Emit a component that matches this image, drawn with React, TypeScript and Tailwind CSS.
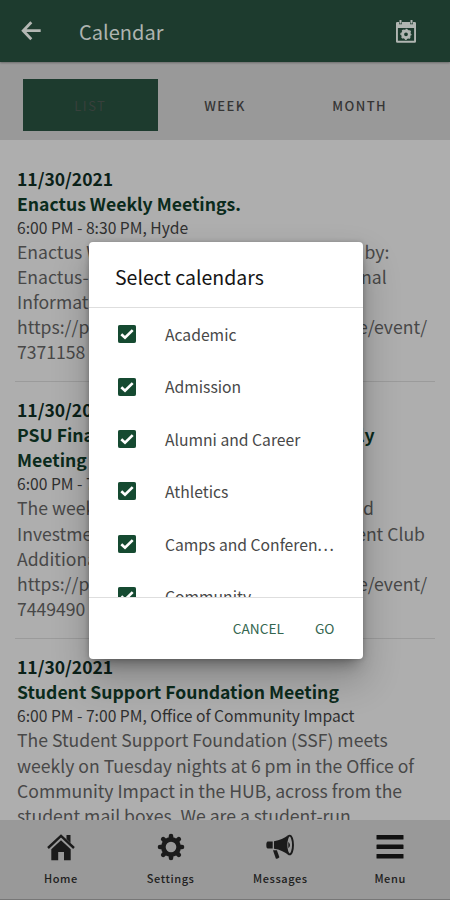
import React, { useState } from "react";

type EventItem = {
  date: string;
  title: string[];
  time: string;
  lines: string[];
};

const tabs = ["LIST", "WEEK", "MONTH"];

const events: EventItem[] = [
  {
    date: "11/30/2021",
    title: ["Enactus Weekly Meetings."],
    time: "6:00 PM - 8:30 PM, Hyde",
    lines: [
      "Enactus Weekly Meeting. Event sponsored by:",
      "Enactus-Plymouth State Meetings. Additional",
      "Information:",
      "https://plymouth.campuslabs.com/engage/event/",
      "7371158",
    ],
  },
  {
    date: "11/30/2021",
    title: ["PSU Finance and Investment Club Weekly", "Meeting"],
    time: "6:00 PM - 7:00 PM, Hyde",
    lines: [
      "The weekly meeting of the PSU Finance and",
      "Investment Club. Sponsored by a Investment Club",
      "Additional Information:",
      "https://plymouth.campuslabs.com/engage/event/",
      "7449490",
    ],
  },
  {
    date: "11/30/2021",
    title: ["Student Support Foundation Meeting"],
    time: "6:00 PM - 7:00 PM, Office of Community Impact",
    lines: [
      "The Student Support Foundation (SSF) meets",
      "weekly on Tuesday nights at 6 pm in the Office of",
      "Community Impact in the HUB, across from the",
      "student mail boxes. We are a student-run",
    ],
  },
];

const calendars = ["Academic", "Admission", "Alumni and Career", "Athletics", "Camps and Conferences", "Community"];

const MAX_LABEL = 18;

const BackIcon = () => (
  <svg width="20" height="20" viewBox="0 0 20 20" fill="none" stroke="#b4b8b4" strokeWidth="2.8">
    <path d="M10.300 1.200 2.200 9.700l8.100 8.500M2.400 9.700h17.300" />
  </svg>
);

const CalendarGearIcon = () => (
  <svg width="20" height="23" viewBox="0 0 20 23">
    <path
      fill="#b1b6b2"
      fillRule="evenodd"
      d="M1.500 2H3v2.200h3V2h8v2.200h3V2h1.500A1.300 1.300 0 0 1 20 3.300v18.200a1.300 1.300 0 0 1-1.300 1.300H1.300A1.300 1.300 0 0 1 0 21.500V3.300A1.300 1.300 0 0 1 1.500 2ZM1.900 8v12.800h16.200V8Z"
    />
    <path fill="#b1b6b2" d="M3.500 0h2v3.400h-2zM14.500 0h2v3.400h-2z" />
    <circle cx="10" cy="14.300" r="3.400" fill="none" stroke="#b1b6b2" strokeWidth="3" />
    <circle cx="10" cy="14.300" r="5" fill="none" stroke="#b1b6b2" strokeWidth="1.300" strokeDasharray="1.900 2.027" strokeDashoffset="0.950" />
  </svg>
);

const HomeIcon = () => (
  <svg width="28" height="27" viewBox="0 0 28 27" fill="#1b1b1b">
    <path d="M19.500 1h4v8l-4-4z" />
    <path d="M1 14 14 1.800 27 14" fill="none" stroke="#1b1b1b" strokeWidth="2.400" />
    <path d="M14 6.200 23.700 15.200V26.300H17v-8.300h-5.800v8.300H4.300V15.200z" />
  </svg>
);

const GearIcon = () => (
  <svg width="28" height="28" viewBox="0 0 28 28">
    <g stroke="#1b1b1b" strokeWidth="4.600" strokeLinecap="round">
      <path d="M14 3v22M3 14h22M6.200 6.200l15.600 15.600M21.800 6.200 6.200 21.800" />
    </g>
    <circle cx="14" cy="14" r="10" fill="#1b1b1b" />
    <circle cx="14" cy="14" r="5.300" fill="#999" />
  </svg>
);

const MegaphoneIcon = () => (
  <svg width="28" height="26" viewBox="0 0 28 26">
    <path d="M1.800 7.500h4.900v7H1.800Q.3 14.500.3 11t1.500-3.500Z" fill="#1b1b1b" />
    <path d="M8 7.200C14 6.500 18 4 22.500 1c-3.200 5-3.200 15 .2 20C18 18 14 15.500 8 14.800Z" fill="#1b1b1b" />
    <ellipse cx="23.700" cy="11" rx="3.300" ry="9.400" fill="none" stroke="#1b1b1b" strokeWidth="1.900" />
    <path d="M22.300 7.700q3.400 3.300 0 6.600z" fill="#1b1b1b" />
    <path d="M7 16.200h3.900l2.500 7q-1.600 2-3.600 1.200z" fill="#1b1b1b" />
  </svg>
);

const MenuIcon = () => (
  <svg width="28" height="24" viewBox="0 0 28 24" fill="#111">
    <rect x="0.500" y="0" width="27" height="4.500" rx="0.600" />
    <rect x="0.500" y="9.500" width="27" height="4.500" rx="0.600" />
    <rect x="0.500" y="19" width="27" height="4.500" rx="0.600" />
  </svg>
);

const navItems = [
  { label: "Home", icon: <HomeIcon /> },
  { label: "Settings", icon: <GearIcon /> },
  { label: "Messages", icon: <MegaphoneIcon /> },
  { label: "Menu", icon: <MenuIcon /> },
];

const Checkbox = ({ checked }: { checked: boolean }) => (
  <svg width="18" height="18" viewBox="0 0 18 18" className="shrink-0">
    <rect x="0.500" y="0.500" width="17" height="17" rx="0.800" fill={checked ? "#154a31" : "#fff"} stroke="#154a31" />
    {checked && <path d="m3.300 9.300 3.700 3.400 7.700-7.600" fill="none" stroke="#fff" strokeWidth="2.700" />}
  </svg>
);

const EventCard = ({ item }: { item: EventItem }) => (
  <article className="mx-[15px] border-b border-[#9b9b9b] px-0.5 pt-[15.500px] pb-[17px] whitespace-nowrap">
    <h3 className="text-[17.500px] leading-[25px] font-bold text-[#0b2118]">{item.date}</h3>
    {item.title.map((line) => (
      <h2 key={line} className="text-[17.600px] leading-[25px] font-bold text-[#0b2b1c]">{line}</h2>
    ))}
    <p className="text-[15.650px] leading-[23px] text-[#303030]">{item.time}</p>
    {item.lines.map((line) => (
      <p key={line} className="text-[17.600px] leading-[25.100px] text-[#484848]">{line}</p>
    ))}
  </article>
);

export default function App() {
  const [selected, setSelected] = useState(calendars);

  const toggle = (name: string) => {
    setSelected(selected.includes(name) ? selected.filter((c) => c !== name) : [...selected, name]);
  };

  return (
    <div className="relative flex h-[900px] w-[450px] flex-col overflow-hidden bg-[#aeaeae] font-['Noto_Sans_CJK_KR',sans-serif]">
      <header className="z-10 flex h-[62px] shrink-0 items-center bg-[#1d3b2e] pr-[34px] pl-[21px] shadow-[0_1px_2px_rgba(0,0,0,0.3)]">
        <BackIcon />
        <h1 className="ml-[38px] flex-1 pt-0.5 text-[20px] leading-[30px] text-[#aeb4b0]">Calendar</h1>
        <CalendarGearIcon />
      </header>

      <nav className="flex h-[78px] shrink-0 items-center bg-[#999] px-[23px] pt-[9px] pb-[1px]">
        {tabs.map((tab, i) => (
          <button
            key={tab}
            className={
              i === 0
                ? "h-[52px] flex-1 bg-[#1d3b2e] pt-0.5 text-[13px] tracking-[1.500px] text-[#38403c]"
                : "h-[52px] flex-1 pt-0.5 text-[13px] font-medium tracking-[1.400px] text-[#353535]"
            }
          >
            {tab}
          </button>
        ))}
      </nav>

      <main className="min-h-0 flex-1 overflow-hidden pt-[10px]">
        {events.map((item) => (
          <EventCard key={item.title[0]} item={item} />
        ))}
      </main>

      <footer className="grid h-20 shrink-0 grid-cols-4 border-b border-[#777] bg-[#999] pr-[5px] pl-1.5">
        {navItems.map(({ label, icon }) => (
          <div key={label} className="flex flex-col items-center">
            <div className="mt-[11px] flex h-[32px] items-center">{icon}</div>
            <span className="mt-[6px] text-[11px] leading-[18px] font-medium tracking-[0.600px] text-[#202020]">{label}</span>
          </div>
        ))}
      </footer>

      {/* ダイアログ */}
      <div className="absolute top-[242px] left-[89px] z-20 flex h-[417px] w-[274px] flex-col overflow-hidden rounded-[4px] bg-white shadow-[0_10px_14px_-6px_rgba(0,0,0,0.350),0_20px_36px_3px_rgba(0,0,0,0.200),0_0_5px_rgba(0,0,0,0.200)]">
        <h2 className="h-[66px] shrink-0 border-b border-[#dedede] pt-[20px] pl-[26px] text-[19.500px] leading-[30px] text-[#151515]">
          Select calendars
        </h2>
        <ul className="min-h-0 flex-1 overflow-hidden">
          {calendars.map((name) => (
            <li key={name} className="flex h-[52.400px] items-center pr-[26px] pl-[28.500px]" onClick={() => toggle(name)}>
              <Checkbox checked={selected.includes(name)} />
              <span className="ml-[29.500px] pt-[1.500px] text-[15.700px] leading-[24px] whitespace-nowrap text-[#484848]">
                {name.slice(0, MAX_LABEL)}
                {name.length > MAX_LABEL && <span className="tracking-[1.600px]">...</span>}
              </span>
            </li>
          ))}
        </ul>
        <div className="flex h-[62px] shrink-0 items-center justify-end gap-[31px] border-t border-[#dedede] pr-[28.500px] pb-px text-[13.700px] text-[#356650]">
          <button>CANCEL</button>
          <button>GO</button>
        </div>
      </div>
    </div>
  );
}
